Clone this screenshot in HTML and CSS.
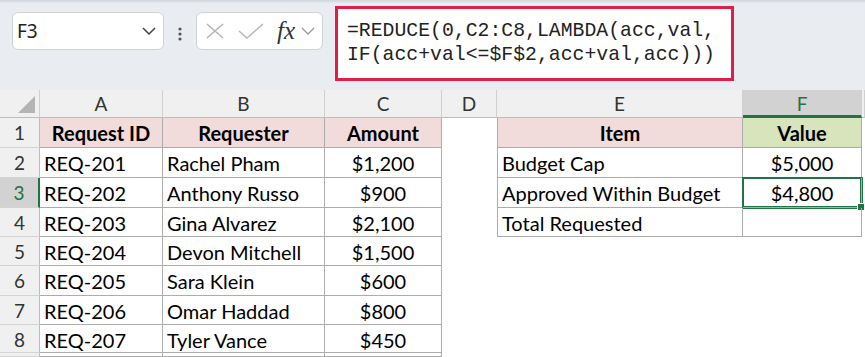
FILE: index.html
```html
<!DOCTYPE html>
<html lang="en">
<head>
    <meta charset="UTF-8">
    <meta name="viewport" content="width=device-width, initial-scale=1.0">
    <title>REDUCE budget check</title>
    <link rel="stylesheet" href="styles.css">
</head>
<body>
    <div class="formula-bar">
        <div class="name-box">
            <span>F3</span>
            <svg class="chev" width="14" height="8" viewBox="0 0 14 8"><polyline points="1,1 7,7 13,1" fill="none" stroke="#444" stroke-width="1.5"/></svg>
        </div>
        <div class="grip">
            <svg width="6" height="16" viewBox="0 0 6 16"><circle cx="3" cy="3" r="1.6" fill="#555"/><circle cx="3" cy="8" r="1.6" fill="#555"/><circle cx="3" cy="13" r="1.6" fill="#555"/></svg>
        </div>
        <div class="fx-box">
            <svg class="cancel" width="18" height="16" viewBox="0 0 18 16"><path d="M1 1 L17 15 M17 1 L1 15" stroke="#b4b4b4" stroke-width="1.5" fill="none"/></svg>
            <svg class="enter" width="26" height="16" viewBox="0 0 26 16"><polyline points="1,8 9,15 25,1" fill="none" stroke="#b4b4b4" stroke-width="1.5"/></svg>
            <span class="fx">fx</span>
            <svg class="chev-sm" width="14" height="8" viewBox="0 0 14 8"><polyline points="1,1 7,7 13,1" fill="none" stroke="#999" stroke-width="1.3"/></svg>
        </div>
        <div class="formula">=REDUCE(0,C2:C8,LAMBDA(acc,val,<br>IF(acc+val&lt;=$F$2,acc+val,acc)))</div>
    </div>

    <div class="sheet">
        <!-- column headers -->
        <div class="hd corner"><span class="tri"></span></div>
        <div class="hd">A</div>
        <div class="hd">B</div>
        <div class="hd">C</div>
        <div class="hd">D</div>
        <div class="hd">E</div>
        <div class="hd hd-sel">F</div>
        <div class="hd"></div>

        <!-- row 1 -->
        <div class="rn">1</div>
        <div class="c head">Request ID</div>
        <div class="c head">Requester</div>
        <div class="c head">Amount</div>
        <div class="e"></div>
        <div class="c head first">Item</div>
        <div class="c head green">Value</div>
        <div class="e"></div>

        <!-- row 2 -->
        <div class="rn">2</div>
        <div class="c">REQ-201</div>
        <div class="c">Rachel Pham</div>
        <div class="c mid">$1,200</div>
        <div class="e"></div>
        <div class="c first">Budget Cap</div>
        <div class="c mid">$5,000</div>
        <div class="e"></div>

        <!-- row 3 -->
        <div class="rn rn-sel">3</div>
        <div class="c">REQ-202</div>
        <div class="c">Anthony Russo</div>
        <div class="c mid">$900</div>
        <div class="e"></div>
        <div class="c first">Approved Within Budget</div>
        <div class="c mid active">$4,800<span class="handle"></span></div>
        <div class="e"></div>

        <!-- row 4 -->
        <div class="rn">4</div>
        <div class="c">REQ-203</div>
        <div class="c">Gina Alvarez</div>
        <div class="c mid">$2,100</div>
        <div class="e"></div>
        <div class="c first">Total Requested</div>
        <div class="c mid"></div>
        <div class="e"></div>

        <!-- row 5 -->
        <div class="rn">5</div>
        <div class="c">REQ-204</div>
        <div class="c">Devon Mitchell</div>
        <div class="c mid">$1,500</div>
        <div class="e"></div><div class="e"></div><div class="e"></div><div class="e"></div>

        <!-- row 6 -->
        <div class="rn">6</div>
        <div class="c">REQ-205</div>
        <div class="c">Sara Klein</div>
        <div class="c mid">$600</div>
        <div class="e"></div><div class="e"></div><div class="e"></div><div class="e"></div>

        <!-- row 7 -->
        <div class="rn">7</div>
        <div class="c">REQ-206</div>
        <div class="c">Omar Haddad</div>
        <div class="c mid">$800</div>
        <div class="e"></div><div class="e"></div><div class="e"></div><div class="e"></div>

        <!-- row 8 -->
        <div class="rn">8</div>
        <div class="c">REQ-207</div>
        <div class="c">Tyler Vance</div>
        <div class="c mid">$450</div>
        <div class="e"></div><div class="e"></div><div class="e"></div><div class="e"></div>

        <!-- row 9 (cut off) -->
        <div class="rn"></div>
        <div class="c"></div>
        <div class="c"></div>
        <div class="c"></div>
        <div class="e"></div><div class="e"></div><div class="e"></div><div class="e"></div>
    </div>
</body>
</html>
```

FILE: styles.css
```css
* {
    box-sizing: border-box;
}
body {
    margin: 0;
    width: 865px;
    height: 357px;
    overflow: hidden;
    background: #e9edf1;
    font-family: Lato, "Noto Sans", sans-serif;
}
.formula-bar {
    display: flex;
    align-items: flex-start;
    height: 90px;
    padding: 6px 0 0 12px;
    box-shadow: inset 0 3px 2px -1px #d3d8de;
}
.name-box {
    display: flex;
    align-items: center;
    justify-content: space-between;
    width: 152px;
    height: 38px;
    margin-top: 6px;
    padding: 0 7px 0 4px;
    background: #fff;
    border: 1px solid #cfd3d8;
    border-radius: 6px;
    font-family: "Noto Sans", sans-serif;
    font-size: 19px;
    color: #222;
}
.grip {
    display: flex;
    justify-content: center;
    width: 32px;
    padding-top: 20px;
}
.fx-box {
    display: flex;
    align-items: center;
    width: 127px;
    height: 38px;
    margin-top: 6px;
    padding-left: 9px;
    background: #fff;
    border: 1px solid #cfd3d8;
    border-radius: 6px;
}
.enter {
    margin-left: 14px;
}
.fx {
    margin-left: 13px;
    font-family: "Liberation Serif", serif;
    font-style: italic;
    font-size: 25px;
    color: #333;
    line-height: 1;
    padding-bottom: 2px;
}
.chev-sm {
    margin-left: 6px;
}
.formula {
    width: 399px;
    height: 75px;
    margin-left: 12px;
    padding: 10px 0 0 9px;
    background: #fff;
    border: 3px solid #df1f4a;
    font-family: "Liberation Mono", monospace;
    font-size: 19.8px;
    line-height: 24px;
    color: #222;
    white-space: nowrap;
}

/* grid */
.sheet {
    display: grid;
    grid-template-columns: 40px 123px 162px 117px 55px 246px 119px 1fr;
    grid-template-rows: 28px 30px 30px 30px 29px 29px 30px 29px 28px 1fr;
    height: 267px;
    background: #fff;
    font-size: 20px;
    color: #000;
}
.hd {
    background: #f0f0f0;
    border-right: 1px solid #d0d0d0;
    border-bottom: 1px solid #bdbdbd;
    text-align: center;
    font-size: 19px;
    line-height: 27px;
    color: #333;
}
.corner {
    position: relative;
}
.tri {
    position: absolute;
    right: 4px;
    bottom: 4px;
    width: 0;
    height: 0;
    border-left: 17px solid transparent;
    border-bottom: 17px solid #b4b4b4;
}
.hd-sel {
    background: #d2d2d2;
    color: #217346;
    border-bottom: 3px solid #217346;
}
.rn {
    background: #f0f0f0;
    border-right: 1px solid #bdbdbd;
    border-bottom: 1px solid #d4d4d4;
    text-align: center;
    font-size: 19px;
    line-height: 29px;
    color: #333;
}
.rn-sel {
    background: #d2d2d2;
    color: #217346;
    border-right: 2px solid #217346;
}
.c {
    position: relative;
    padding: 0 4px;
    border-right: 1px solid #acacac;
    border-bottom: 1px solid #acacac;
    line-height: 30px;
    white-space: nowrap;
}
.first {
    border-left: 1px solid #acacac;
}
.mid {
    text-align: center;
}
.head {
    background: #f2dcdb;
    font-weight: bold;
    text-align: center;
}
.green {
    background: #d8e4bc;
}
.active {
    box-shadow: 0 0 0 1px #217346, inset 0 0 0 1px #217346;
}
.handle {
    position: absolute;
    right: -4px;
    bottom: -4px;
    width: 8px;
    height: 8px;
    background: #217346;
    border: 1px solid #fff;
}
```
